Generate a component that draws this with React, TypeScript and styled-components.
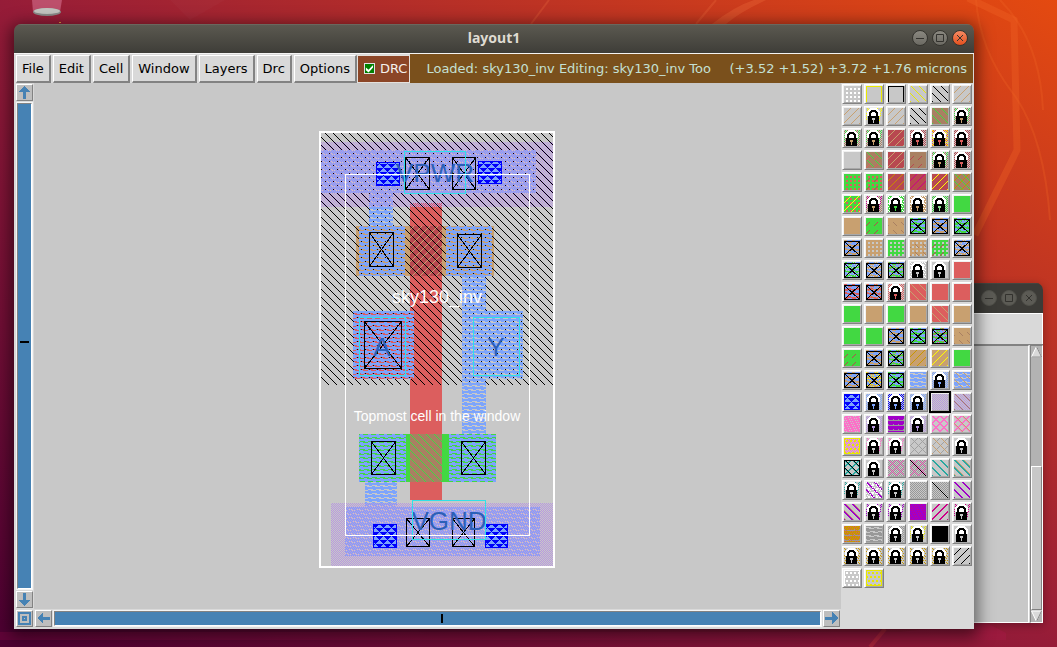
import React, { useState } from "react";
import styled, { createGlobalStyle, css } from "styled-components";

const GlobalStyle = createGlobalStyle`
  * { box-sizing: border-box; }
  body { margin: 0; font-family: "DejaVu Sans", sans-serif; font-size: 13px; }
`;

/* ---------- colours ---------- */

const C = {
  gray: "#c8c8c8",
  white: "#ffffff",
  black: "#000000",
  yellow: "#e8e800",
  lemon: "#ffff00",
  tan: "#c8a070",
  brown: "#a98062",
  green: "#42d842",
  red: "#dc5e5e",
  gate: "#b84850",
  orange: "#c88c00",
  magenta: "#cc0088",
  metal: "#7ca4fc",
  blue: "#0000fc",
  lilac: "#b898e0",
  pink: "#fc70c8",
  violet: "#a000c8",
  teal: "#28a8a0",
  mid: "#989898",
  gold: "#c89600",
  cyan: "#30e0e8",
  label: "#2c60b8",
  steel: "#4682b4",
};

/* ---------- stipples ---------- */

type Test = (x: number, y: number) => boolean;

const stipples: Record<string, Test> = {
  fill: () => true,
  down: (x, y) => (x - y + 16) % 8 === 1,
  well: (x, y) => (x - y + 16) % 8 === 0,
  up: (x, y) => (x + y) % 8 === 6,
  oddUp: (x, y) => (x + y) % 8 === 7,
  bold: (x, y) => (x - y + 16) % 8 < 2,
  boldUp: (x, y) => (x + y) % 8 > 5,
  trail: (x, y) => (x - y + 16) % 8 === 2,
  one: (x, y) => x === y,
  dashUp: (x, y) => (x + y) % 8 === 7 && y % 8 > 3,
  dashDown: (x, y) => (x - y + 16) % 8 === 1 && y % 8 > 3,
  dots: (x, y) => x % 4 > 1 && y % 4 > 1,
  brick: (x, y) => y % 4 > 1 && (x + (y % 8 > 3 ? 2 : 0)) % 4 > 1,
  check: (x, y) => (x + y) % 2 === 0,
  oddCheck: (x, y) => (x + y) % 2 === 1,
  cross: (x, y) => (x - y + 16) % 8 === 1 || (x + y) % 8 === 7,
  boldCross: (x, y) => (x - y + 16) % 8 < 2 || (x + y) % 8 > 5,
  wave: (x, y) => {
    const s = (x + (y % 8 > 3 ? 4 : 0)) % 8;
    return !((y % 4 === 1 && s < 5) || (y % 4 === 2 && s > 2));
  },
  band: (x, y) => {
    const s = (x + (y % 8 > 3 ? 4 : 0)) % 8;
    return !(y % 4 === 1 || (y % 4 === 2 && s > 3) || (y % 4 === 0 && s < 3));
  },
  stripe: (x, y) => y % 5 === 4 || (y % 5 === 3 && x % 5 === 0),
  specks: (x, y) => (x * 5 + y * 3) % 11 < 2,
  tri: (x, y) => {
    const r = y % 4;
    const s = (x + (y % 8 > 3 ? 4 : 0)) % 8;
    return s >= r && s < 7 - r;
  },
  edge: (x, y) => y === 0 || x === 0 || x === 15,
  frame: (x, y) => y === 0 || x === 0 || x === 15 || y === 15,
  sides: (x, y) => (x < 3 || x > 12 || y < 2) && (x + y) % 2 === 1,
  flecks: (x, y) => (x < 3 || x > 12 || y < 2) && (x * 3 + y * 5) % 7 < 2,
  few: (x, y) => (x < 3 || x > 12 || y < 2) && (x + y) % 2 === 1 && (x * 3 + y * 5) % 11 < 4,
};

const pixelPath = (test: Test, w: number, h: number) => {
  let d = "";
  for (let y = 0; y < h; y++) {
    for (let x = 0; x < w; x++) {
      if (!test(x, y)) continue;
      let run = 1;
      while (x + run < w && test(x + run, y)) run++;
      d += `M${x} ${y}h${run}v1h-${run}z`;
      x += run;
    }
  }
  return d;
};

/* ---------- palette data: background, then stipple/colour pairs ---------- */

type Spec = string[];

const contact = (under: string, speck?: string): Spec => [
  under, "band", C.metal, ...(speck ? ["specks", speck] : []), "contact", "",
];
const lock = (pattern: string, colour: string, hole = C.gray): Spec => [
  C.gray, pattern, colour, "lock", hole,
];
const mixedLock = (speck: string): Spec => [C.gray, "sides", C.brown, "few", speck, "lock", C.tan];

const swatches: Spec[] = [
  [C.gray, "dots", C.white], [C.gray, "edge", C.yellow], [C.gray, "edge", C.black],
  [C.gray, "down", C.yellow], [C.gray, "down", C.black], [C.gray, "up", C.tan],

  [C.gray, "up", C.tan], lock("few", C.lemon), [C.gray, "up", C.tan],
  [C.gray, "down", C.black], [C.brown, "down", C.green], mixedLock(C.green),

  mixedLock(C.green), mixedLock(C.green), [C.gate, "up", C.tan], lock("sides", C.gate, C.red),
  [C.gray, "sides", C.red, "flecks", C.lemon, "lock", C.red], lock("sides", C.gate, C.red),

  [C.gray], [C.brown, "down", C.green, "dashUp", C.red], [C.gate, "up", C.tan],
  [C.brown, "dashUp", C.gate], mixedLock(C.green), lock("sides", C.gate, C.red),

  [C.green, "dots", C.red], [C.green, "dots", C.red, "dashUp", C.gate], [C.gate, "up", C.orange],
  [C.gate, "up", C.magenta], [C.gate, "up", C.lemon], [C.brown, "down", C.green, "up", C.orange],

  [C.green, "dots", C.red, "up", C.lemon], mixedLock(C.magenta),
  [C.green, "flecks", C.white, "lock", C.green], [C.tan, "flecks", C.white, "lock", C.tan],
  lock("sides", C.green, "#90e090"), [C.green],

  [C.tan], [C.green, "dashUp", C.gate], [C.tan, "dashDown", C.brown],
  contact(C.green), contact(C.tan), contact(C.green, C.green),

  contact(C.tan), [C.tan, "dots", C.gray], [C.green, "dots", C.gray],
  [C.tan, "dots", C.gray, "dashDown", C.brown], [C.green, "dots", C.gray, "dashUp", C.gate],
  contact(C.tan, C.gray),

  contact(C.green, C.gray), contact(C.tan, C.gray), contact(C.green, C.tan),
  lock("flecks", C.white), lock("fill", C.gray), [C.red],

  contact(C.red), contact(C.red, C.tan), lock("sides", C.red, C.red),
  [C.red, "down", C.tan], [C.red], [C.red],

  [C.green], [C.tan], [C.green], [C.tan], [C.red, "down", C.tan], [C.tan],

  [C.green], [C.green], contact(C.tan), contact(C.green), contact(C.green, C.red),
  [C.tan, "dashDown", C.brown],

  [C.green, "dashUp", C.gate], contact(C.tan), contact(C.green, C.tan),
  [C.tan, "up", C.gold], [C.tan, "up", C.lemon], [C.green],

  contact(C.tan), contact(C.tan, C.lemon), contact(C.green), [C.gray, "wave", C.metal],
  lock("sides", C.metal, C.metal), [C.gray, "wave", C.metal, "down", C.tan],

  [C.metal, "tri", C.blue, "frame", C.blue], lock("sides", C.metal, C.metal),
  lock("sides", C.blue, C.metal), lock("sides", C.metal, C.metal),
  [C.gray, "check", C.lilac], [C.gray, "check", C.lilac, "down", C.brown],

  [C.pink, "specks", C.gray], lock("sides", C.lilac, C.lilac), [C.violet, "stripe", C.mid],
  lock("sides", C.lilac, C.lilac), [C.gray, "boldCross", C.pink],
  [C.gray, "boldCross", C.pink, "down", C.tan],

  [C.gray, "check", C.pink, "brick", C.yellow, "frame", C.yellow], lock("few", C.pink),
  lock("few", C.pink), [C.gray, "cross", "#a0a0a0"], [C.gray, "cross", "#a0a0a0", "down", C.tan],
  lock("fill", C.gray),

  [C.gray, "boldCross", C.teal, "down", C.black, "frame", C.black], lock("fill", C.gray),
  [C.gray, "check", C.mid, "cross", C.pink], [C.gray, "check", C.mid, "cross", C.pink, "one", C.black],
  [C.gray, "bold", C.teal], [C.gray, "bold", C.teal, "trail", C.tan],

  lock("few", C.teal), [C.gray, "dots", C.white, "bold", C.violet, "specks", C.white],
  lock("few", C.teal), [C.gray, "check", C.mid], [C.gray, "check", C.mid, "one", C.black],
  [C.gray, "bold", C.violet],

  [C.gray, "bold", C.violet, "trail", C.tan], lock("few", C.violet), lock("few", C.violet),
  [C.violet, "specks", C.magenta], [C.gray, "boldUp", C.magenta], lock("few", C.magenta),

  [C.gold, "stripe", C.mid, "specks", C.red], [C.gray, "wave", C.mid], lock("sides", C.mid),
  lock("few", C.yellow), [C.black], lock("fill", C.gray),

  lock("flecks", C.gold), lock("flecks", C.gold), lock("flecks", C.gold), lock("flecks", C.gold),
  lock("flecks", C.gold), [C.gray, "up", C.black],

  [C.gray, "brick", C.white, "edge", C.white], [C.gray, "brick", C.yellow, "frame", C.yellow],
];

function SwatchArt({ spec }: { spec: Spec }) {
  const layers: React.ReactNode[] = [];
  for (let i = 1; i < spec.length; i += 2) {
    const [kind, colour] = [spec[i], spec[i + 1]];
    if (kind === "contact") {
      layers.push(
        <path key={i} d="M0.500 1.500h15v14h-15zM1 2l14 13M15 2L1 15" fill="none" stroke="#000" />
      );
    } else if (kind === "lock") {
      layers.push(
        <g key={i}>
          <path d="M1 8V3h1V2h1V1h1V0h7v1h1v1h1v1h1v5z" fill="#fff" />
          <path d="M3 8V4h1V3h1V2h5v1h1v1h1v4h-2V5H9V4H6v1H5v3z" fill="#000" />
          <path d="M2 8h11v8H2z" fill="#000" />
          <path d="M6 10h3v2H8v3H7v-3H6z" fill={colour} />
        </g>
      );
    } else {
      layers.push(<path key={i} d={pixelPath(stipples[kind], 16, 16)} fill={colour} />);
    }
  }
  return (
    <svg width="16" height="16" viewBox="0 0 16 16" shapeRendering="crispEdges" aria-hidden="true">
      <rect width="16" height="16" fill={spec[0]} />
      {layers}
    </svg>
  );
}

/* ---------- desktop ---------- */

const Desktop = styled.main`
  position: relative;
  min-height: 100vh;
  overflow: hidden;
  background: linear-gradient(to top right, #4c0032, #961c38 50%, #e44a10);
`;

const Wallpaper = styled.svg`
  position: absolute;
  inset: 0;
  width: 100%;
  height: 100%;
`;

const Trash = styled.svg`
  position: absolute;
  left: 30px;
  top: 0;
`;

const WindowFrame = styled.section<{ $back?: boolean }>`
  position: absolute;
  display: flex;
  flex-direction: column;
  border-radius: 7px 7px 0 0;
  overflow: hidden;
  ${(p) =>
    p.$back
      ? css`
          left: 40%;
          right: 14px;
          top: 283px;
          bottom: 24px;
          box-shadow: 0 2px 8px rgba(0, 0, 0, 0.3);
        `
      : css`
          left: 14px;
          right: 83px;
          top: 24px;
          bottom: 18px;
          box-shadow: 0 4px 16px 4px rgba(0, 0, 0, 0.5);
        `}
`;

const TitleBar = styled.header<{ $dim?: boolean }>`
  flex: none;
  display: grid;
  grid-template-columns: 1fr auto 1fr;
  align-items: center;
  height: ${(p) => (p.$dim ? 30 : 29)}px;
  padding: 0 6px 2px;
  border-top: 1px solid ${(p) => (p.$dim ? "#45443f" : "#6a675e")};
  background: ${(p) => (p.$dim ? "#3c3b37" : "linear-gradient(#5b5950, #3e3d38)")};
`;

const Title = styled.h1`
  grid-column: 2;
  margin: 0;
  font: bold 14px/20px "Noto Sans", sans-serif;
  color: #dfdbd2;
`;

const Controls = styled.div`
  grid-column: 3;
  justify-self: end;
  display: flex;
  gap: 4px;
`;

const Control = styled.button<{ $tone: "plain" | "close" | "dim" }>`
  display: grid;
  place-items: center;
  width: 16px;
  height: 16px;
  padding: 0;
  border: 1px solid ${(p) => (p.$tone === "dim" ? "#50504a" : "#35342f")};
  border-radius: 50%;
  color: #33322e;
  background: ${(p) =>
    ({ plain: "linear-gradient(#8a8880, #6c6a63)", close: "linear-gradient(#f58a63, #e4501e)", dim: "#5c5b55" })[p.$tone]};
`;

function WindowControls({ dim }: { dim?: boolean }) {
  const glyphs: [string, string][] = [
    ["Minimize", "M3 7.500h8"],
    ["Maximize", "M3.500 3.500h7v7h-7z"],
    ["Close", "M4 4l6 6M10 4l-6 6"],
  ];
  return (
    <Controls>
      {glyphs.map(([name, d]) => (
        <Control key={name} aria-label={name} $tone={dim ? "dim" : name === "Close" ? "close" : "plain"}>
          <svg width="14" height="14" viewBox="0 0 14 14" fill="none" stroke="currentColor">
            <path d={d} />
          </svg>
        </Control>
      ))}
    </Controls>
  );
}

/* ---------- menu bar ---------- */

const raised = css`
  border: 1px solid;
  border-color: #fff #828282 #828282 #fff;
`;

const MenuBar = styled.nav`
  flex: none;
  display: flex;
  gap: 2px;
  height: 30px;
  padding: 1px 0 0 2px;
  border-top: 1px solid #f4f4f4;
  background: #d9d9d9;
  line-height: 16px;
`;

const MenuButton = styled.button`
  ${raised}
  border-width: 1px 2px 2px 1px;
  padding: 0 5px;
  font: inherit;
  color: #000;
  background: #d9d9d9;
`;

const DrcToggle = styled.label`
  display: flex;
  align-items: center;
  gap: 5px;
  margin-left: -2px;
  padding: 0 2px 1px 6px;
  border: 1px solid #e4e0dc;
  color: #f4f0ec;
  background: #8b4526;
`;

const Tick = styled.input`
  appearance: none;
  width: 11px;
  height: 11px;
  margin: 0;
  border: 1px solid #e0e0e0;
  background: #fff;
  &:checked { background: #008000; }
  &:checked::after {
    content: "";
    display: block;
    height: 9px;
    background: #fff;
    clip-path: polygon(10% 40%, 40% 65%, 90% 10%, 90% 40%, 40% 95%, 10% 70%);
  }
`;

const Status = styled.div`
  flex: 1;
  display: flex;
  align-items: center;
  justify-content: space-between;
  margin: -1px 1px 0 -2px;
  padding: 0 6px 0 16px;
  white-space: pre;
  color: #c4e0d4;
  background: #7a501c;
`;

/* ---------- work area ---------- */

const Work = styled.div`
  flex: 1;
  min-height: 0;
  display: grid;
  grid-template-columns: 20px 1fr 133px;
  grid-template-rows: 1fr 20px;
  background: #d9d9d9;
`;

const Rail = styled.div<{ $flat?: boolean }>`
  display: flex;
  flex-direction: ${(p) => (p.$flat ? "row" : "column")};
  gap: 1px;
  padding: ${(p) => (p.$flat ? "1px 1px 2px 1px" : "1px 1px 1px 2px")};
`;

const ScrollKey = styled.button`
  ${raised}
  flex: none;
  display: grid;
  place-items: center;
  width: 17px;
  height: 17px;
  padding: 0;
  background: #bebebe;
`;

const Corner = styled.div`
  padding: 1px 1px 2px 2px;
`;

const Trough = styled.div<{ $flat?: boolean }>`
  flex: 1;
  display: grid;
  place-items: center;
  padding: ${(p) => (p.$flat ? "0 0 0 8px" : "0 0 8px")};
  border: 2px solid;
  border-color: #828282 #fff #fff #828282;
  outline: 1px solid #f4f4f4;
  outline-offset: -1px;
  background: ${C.steel};
`;

const Mark = styled.i<{ $flat?: boolean }>`
  width: ${(p) => (p.$flat ? 2 : 9)}px;
  height: ${(p) => (p.$flat ? 9 : 2)}px;
  background: #000;
`;

const Canvas = styled.div`
  display: flex;
  align-items: center;
  justify-content: center;
  padding: 7px 2px 0 0;
  background: ${C.gray};
`;

const Palette = styled.div`
  grid-column: 3;
  grid-row: 1 / 3;
  display: grid;
  grid-template-columns: repeat(6, 20px);
  grid-auto-rows: 20px;
  gap: 2px;
  align-content: start;
  padding: 1px;
`;

const Swatch = styled.button<{ $picked: boolean }>`
  ${raised}
  display: grid;
  place-items: center;
  padding: 0;
  background: #d9d9d9;
  box-shadow: inset 1px 1px #f0f0f0, inset -1px -1px #a8a8a8;
  ${(p) => p.$picked && css`border-color: #000; outline: 1px solid #000;`}
`;

const arrows = {
  up: "M7 1L13 7H9V14H6V7H1z",
  down: "M7 14L13 8H9V1H6V8H1z",
  left: "M1 7L7 1V6H14V9H7V13z",
  right: "M14 7L8 1V6H1V9H8V13z",
};

function Arrow({ dir }: { dir: keyof typeof arrows }) {
  return (
    <ScrollKey aria-label={`Scroll ${dir}`}>
      <svg width="15" height="15" viewBox="0 0 15 15" shapeRendering="crispEdges">
        <path d={arrows[dir]} fill={C.steel} />
      </svg>
    </ScrollKey>
  );
}

/* ---------- cell layout drawing ---------- */

type Box = [number, number, number, number];

const rect = ([x1, y1, x2, y2]: Box, fill: string) => (
  <rect key={`${x1}-${y1}-${fill}`} x={x1} y={y1} width={x2 - x1} height={y2 - y1} fill={fill} />
);

const ring = ([x1, y1, x2, y2]: Box, stroke: string) => (
  <path key={`${x1}-${y1}`} d={`M${x1 + 0.5} ${y1 + 0.5}H${x2 - 0.5}V${y2 - 0.5}H${x1 + 0.5}z`} fill="none" stroke={stroke} />
);

const metal: Box[] = [
  [321, 150, 536, 193], [369, 193, 393, 226], [359, 226, 405, 276], [446, 226, 492, 276],
  [462, 276, 486, 311], [353, 311, 414, 379], [462, 311, 523, 379], [462, 379, 486, 434],
  [359, 434, 406, 482], [449, 434, 496, 482], [365, 482, 397, 507], [345, 507, 540, 556],
];
const contacts: Box[] = [
  [405, 157, 430, 190], [452, 157, 476, 190], [369, 232, 394, 267], [457, 234, 482, 268],
  [364, 321, 402, 369], [371, 441, 396, 475], [461, 441, 486, 475],
  [406, 518, 430, 547], [452, 518, 475, 547],
];
const vias: Box[] = [
  [376, 162, 400, 186], [478, 161, 502, 184], [373, 524, 397, 548], [485, 524, 508, 548],
];
const ports: Box[] = [
  [404, 151, 466, 194], [359, 317, 406, 376], [473, 317, 520, 376], [412, 500, 486, 540],
];

function Tile({ id, kind, colour, bg }: { id: string; kind: string; colour: string; bg?: string }) {
  return (
    <pattern id={id} width="8" height="8" patternUnits="userSpaceOnUse">
      {bg && <rect width="8" height="8" fill={bg} />}
      <path d={pixelPath(stipples[kind], 8, 8)} fill={colour} />
    </pattern>
  );
}

const NetLabel = styled.text`
  font: 26px "Liberation Sans", sans-serif;
  fill: ${C.label};
  text-anchor: middle;
`;

const CellLabel = styled.text<{ $size: number }>`
  font: ${(p) => p.$size}px "Liberation Sans", sans-serif;
  fill: #fff;
  text-anchor: middle;
`;

function CellDrawing() {
  return (
    <svg width="236" height="437" viewBox="319 131 236 437" shapeRendering="crispEdges">
      <defs>
        <Tile id="well" kind="well" colour={C.black} />
        <Tile id="metal" kind="wave" colour={C.metal} />
        <Tile id="tap" kind="oddCheck" colour={C.lilac} />
        <Tile id="pgate" kind="oddUp" colour={C.tan} bg={C.gate} />
        <Tile id="ngate" kind="well" colour={C.green} bg={C.brown} />
        <Tile id="via" kind="tri" colour={C.blue} bg={C.metal} />
      </defs>

      {rect([410, 203, 442, 500], C.red)}
      {rect([353, 311, 414, 379], C.red)}
      {rect([356, 226, 494, 276], C.tan)}
      {rect([410, 226, 442, 276], "url(#pgate)")}
      {rect([359, 434, 496, 482], C.green)}
      {rect([410, 434, 442, 482], "url(#ngate)")}
      {rect([321, 133, 553, 385], "url(#well)")}
      {metal.map((b) => rect(b, "url(#metal)"))}
      {rect([321, 142, 553, 207], "url(#tap)")}
      {rect([331, 503, 553, 566], "url(#tap)")}

      {vias.map((b) => (
        <g key={b.join()}>
          {rect(b, "url(#via)")}
          {ring(b, C.blue)}
        </g>
      ))}
      {contacts.map((b) => (
        <g key={b.join()}>
          {ring(b, C.black)}
          <path d={`M${b[0]} ${b[1]}L${b[2]} ${b[3]}M${b[2]} ${b[1]}L${b[0]} ${b[3]}`} stroke="#000" />
        </g>
      ))}

      <NetLabel x="435" y="182">VPWR</NetLabel>
      <NetLabel x="382" y="356">A</NetLabel>
      <NetLabel x="496" y="356">Y</NetLabel>
      <NetLabel x="449" y="530">VGND</NetLabel>
      {ports.map((b) => ring(b, C.cyan))}

      {ring([345, 174, 530, 536], C.white)}
      <rect x="320" y="132" width="234" height="435" fill="none" stroke="#fff" strokeWidth="2" />
      <CellLabel x="437" y="303" $size={18}>sky130_inv</CellLabel>
      <CellLabel x="437" y="421" $size={14}>Topmost cell in the window</CellLabel>
    </svg>
  );
}

/* ---------- window behind ---------- */

const BackTools = styled.div`
  flex: none;
  height: 31px;
  border: 1px solid #fff;
  border-width: 1px 1px 0 0;
  background: #d9d9d9;
`;

const BackBody = styled.div`
  flex: 1;
  display: flex;
  border-top: 1px solid #828282;
  background: #d9d9d9;
`;

const BackPage = styled.div`
  flex: 1;
  border: 1px solid;
  border-color: #828282 #fff #fff #828282;
  background: ${C.gray};
`;

const BackScroll = styled.div`
  display: flex;
  flex-direction: column;
  width: 13px;
  margin-left: 1px;
  border: 1px solid;
  border-color: #828282 #fff #fff #828282;
  background: #b3b3b3;
`;

const BackThumb = styled.div`
  ${raised}
  flex: 0 0 144px;
  margin-top: auto;
  background: ${C.gray};
`;

const menus = ["File", "Edit", "Cell", "Window", "Layers", "Drc", "Options"];

export default function App() {
  const [picked, setPicked] = useState(88);
  const [drc, setDrc] = useState(true);

  return (
    <Desktop>
      <GlobalStyle />
      <Wallpaper viewBox="0 0 1057 647" preserveAspectRatio="none" fill="none" aria-hidden="true">
        <path d="M968 -2L1014 20L1017 150L975 235" stroke="#f06424" strokeOpacity="0.35" strokeWidth="7" />
        <path d="M976 0Q980 50 1012 92T1050 220M1000 0Q1040 40 1043 110" stroke="#f06424" strokeOpacity="0.3" strokeWidth="2" />
        <path d="M712 24Q735 6 754 0H766Q740 12 726 24z" fill="#f07040" fillOpacity="0.3" />
        <path d="M531 24L549 0M696 24L716 0" stroke="#f07040" strokeOpacity="0.25" strokeWidth="2" />
        <path d="M170 0L190 20L225 0z" fill="#fff" fillOpacity="0.02" />
        <path d="M0 632H900L985 622L1006 633V640H0z" fill="#c81860" fillOpacity="0.16" />
        <path d="M870 647L885 629" stroke="#e04040" strokeOpacity="0.3" strokeWidth="4" />
      </Wallpaper>
      <Trash width="34" height="24" viewBox="0 0 34 24" aria-hidden="true">
        <path d="M2 0H32L30 12Q17 17 3 12z" fill="#e080a0" fillOpacity="0.5" />
        <ellipse cx="17" cy="12" rx="14" ry="4" fill="#8a8a88" />
        <ellipse cx="17" cy="11" rx="13" ry="3" fill="#c4c4c0" />
        <path d="M29 22h2v1h-2z" fill="#e0a040" />
      </Trash>

      <WindowFrame $back>
        <TitleBar $dim>
          <WindowControls dim />
        </TitleBar>
        <BackTools />
        <BackBody>
          <BackPage />
          <BackScroll>
            <svg width="11" height="12" viewBox="0 0 11 12">
              <path d="M0 0h11v12H0z" fill="#b3b3b3" />
              <path d="M5.500 0.500L10.500 11H0.500z" fill="#d9d9d9" stroke="#fff" />
              <path d="M5.500 0.500L10.500 11H0.500" fill="none" stroke="#828282" />
            </svg>
            <BackThumb />
            <svg width="11" height="12" viewBox="0 0 11 12">
              <path d="M0 0h11v12H0z" fill="#b3b3b3" />
              <path d="M0.500 1H10.500L5.500 11.500z" fill="#d9d9d9" stroke="#fff" />
              <path d="M10.500 1L5.500 11.500" stroke="#828282" />
            </svg>
          </BackScroll>
        </BackBody>
      </WindowFrame>

      <WindowFrame>
        <TitleBar>
          <Title>layout1</Title>
          <WindowControls />
        </TitleBar>
        <MenuBar>
          {menus.map((m) => (
            <MenuButton key={m}>{m}</MenuButton>
          ))}
          <DrcToggle>
            <Tick type="checkbox" checked={drc} onChange={() => setDrc(!drc)} />
            DRC
          </DrcToggle>
          <Status>
            <span>Loaded: sky130_inv Editing: sky130_inv Too</span>
            <span>(+3.52 +1.52) +3.72 +1.76 microns</span>
          </Status>
        </MenuBar>
        <Work>
          <Rail>
            <Arrow dir="up" />
            <Trough><Mark /></Trough>
            <Arrow dir="down" />
          </Rail>
          <Canvas>
            <CellDrawing />
          </Canvas>
          <Palette>
            {swatches.map((spec, i) => (
              <Swatch key={i} aria-label={`Layer ${i + 1}`} $picked={i === picked} onClick={() => setPicked(i)}>
                <SwatchArt spec={spec} />
              </Swatch>
            ))}
          </Palette>
          <Corner>
            <ScrollKey aria-label="Zoom to fit">
              <svg width="15" height="15" viewBox="0 0 15 15" shapeRendering="crispEdges" fill="none" stroke={C.steel}>
                <rect x="2" y="2" width="11" height="11" strokeWidth="2" />
                <rect x="6" y="6" width="3" height="3" strokeWidth="2" />
              </svg>
            </ScrollKey>
          </Corner>
          <Rail $flat>
            <Arrow dir="left" />
            <Trough $flat><Mark $flat /></Trough>
            <Arrow dir="right" />
          </Rail>
        </Work>
      </WindowFrame>
    </Desktop>
  );
}
